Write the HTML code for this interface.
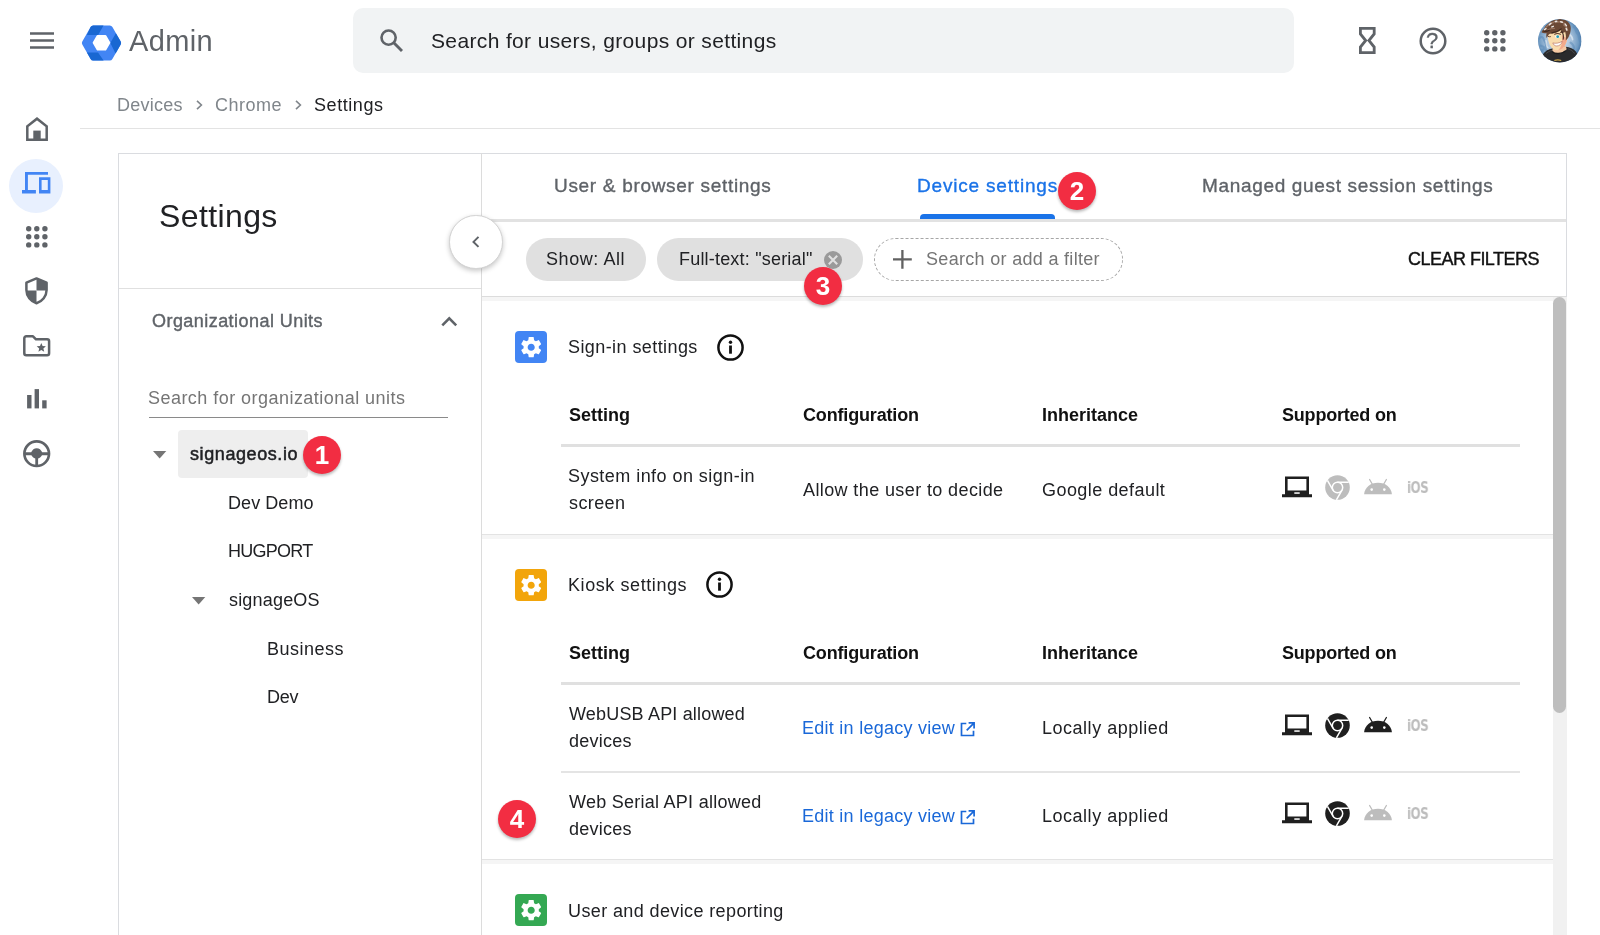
<!DOCTYPE html>
<html lang="en">
<head>
<meta charset="utf-8">
<title>Admin - Settings</title>
<style>
*{box-sizing:border-box;margin:0;padding:0}
html,body{width:1600px;height:935px;overflow:hidden;background:#fff}
body{font-family:"Liberation Sans",sans-serif;color:#202124;position:relative}
.abs{position:absolute}
.t{position:absolute;white-space:nowrap;color:#202124;will-change:transform}
svg{display:block;position:absolute;overflow:visible}
#searchbox{left:352.700px;top:8px;width:941.600px;height:64.500px;background:#f1f3f4;border-radius:10px}
#bcline{left:80px;top:128px;width:1520px;height:1.300px;background:#e3e3e3}
#card{left:118px;top:153px;width:1449px;height:800px;border:1px solid #dadce0;background:#fff}
#leftsep{left:119px;top:288px;width:362px;height:1px;background:#e0e0e0}
#vsep{left:481px;top:153px;width:1.300px;height:800px;background:#dcdcdc}
#tabline{left:482px;top:219.200px;width:1084px;height:2.400px;background:#e2e2e2}
#tabactive{left:919.500px;top:214.400px;width:135.500px;height:4.800px;background:#1a73e8;border-radius:4px 4px 0 0}
#filterline{left:482px;top:296px;width:1084px;height:1px;background:#dcdcdc}
#filtershadow{left:482px;top:297px;width:1084px;height:4px;background:#f5f5f5}
.chip{position:absolute;top:237.700px;height:43.500px;border-radius:22px;background:#e0e0e0}
.gap{position:absolute;left:482px;width:1071px;height:5.300px;background:#f5f5f5;border-top:1.500px solid #e3e3e3}
.hline{position:absolute;left:561px;width:959px}
.badge{position:absolute;width:38px;height:38px;border-radius:50%;background:#f22d42;box-shadow:0 2px 3px rgba(0,0,0,.28);color:#fff;font-weight:bold;font-size:26px;text-align:center;line-height:38px;will-change:transform}
.gear{position:absolute;left:515px;width:32px;height:32px;border-radius:4px}
.tab{color:#5f6368;-webkit-text-stroke:0.350px currentColor}
.med{-webkit-text-stroke:0.400px currentColor}
.med2{-webkit-text-stroke:0.500px currentColor}
.th{color:#111;font-weight:bold}
.lk{color:#1a68d8}
.ios{font-size:15px;line-height:16px;font-weight:bold;color:#bdbdbd;letter-spacing:-0.600px;transform:scaleX(0.880);transform-origin:0 0;font-family:"DejaVu Sans Condensed","Liberation Sans",sans-serif}
</style>
</head>
<body>

<!-- ===== TOP BAR ===== -->
<svg id="hamb" style="left:30px;top:32px" width="24" height="17" viewBox="0 0 24 17"><path d="M0 1.400h24M0 8.500h24M0 15.600h24" stroke="#5f6368" stroke-width="2.500" fill="none"/></svg>
<svg id="logo" style="left:81px;top:25px" width="41" height="36" viewBox="0 0 41 36">
  <path d="M12.200 0.600h16.600a3 3 0 0 1 2.600 1.500l8.300 14.400a3 3 0 0 1 0 3l-8.300 14.400a3 3 0 0 1-2.600 1.500H12.200a3 3 0 0 1-2.600-1.500L1.300 19.500a3 3 0 0 1 0-3L9.600 2.100a3 3 0 0 1 2.600-1.500z" fill="#4285f4"/>
  <path d="M12.200 0.600h10.300l-5.400 9.400-11.200-0.100 3.700-7.800a3 3 0 0 1 2.600-1.500z" fill="#1967d2"/>
  <path d="M39.700 16.500a3 3 0 0 1 0 3L34.600 28.400 29.300 18l5.600-9.800z" fill="#1967d2"/>
  <path d="M9.600 33.900 5.900 27.500l11.100 0 5.600 8H12.200a3 3 0 0 1-2.600-1.500z" fill="#1967d2"/>
  <path d="M16.600 10h7.800a1 1 0 0 1 .9.500l3.900 6.800a1 1 0 0 1 0 1l-3.900 6.800a1 1 0 0 1-.9.500h-7.800a1 1 0 0 1-.9-.5l-3.900-6.800a1 1 0 0 1 0-1l3.900-6.800a1 1 0 0 1 .9-.5z" fill="#fff"/>
</svg>
<div class="abs" id="searchbox"></div>
<svg id="sicon" style="left:380px;top:29px" width="24" height="24" viewBox="0 0 24 24"><circle cx="8.600" cy="8.600" r="7.100" fill="none" stroke="#5f6368" stroke-width="2.600"/><path d="M13.800 13.800 22 22" stroke="#5f6368" stroke-width="2.900"/></svg>
<svg id="hourglass" style="left:1359.200px;top:27px" width="16.600" height="27" viewBox="0 0 16.600 27"><path d="M1.400 1.400h13.800v5.500L9.900 13.500l5.300 6.600v5.500H1.400v-5.500L6.700 13.500 1.400 6.900z" fill="none" stroke="#5f6368" stroke-width="2.800"/></svg>
<svg id="help" style="left:1418.500px;top:26.500px" width="28" height="28" viewBox="0 0 28 28"><circle cx="14" cy="14" r="12.300" fill="none" stroke="#5f6368" stroke-width="2.500"/></svg>
<svg id="apps" style="left:1484.100px;top:30px" width="21.600" height="21.600" viewBox="0 0 21.600 21.600" fill="#5f6368"><circle cx="2.70" cy="2.70" r="2.7"/><circle cx="10.80" cy="2.70" r="2.7"/><circle cx="18.90" cy="2.70" r="2.7"/><circle cx="2.70" cy="10.80" r="2.7"/><circle cx="10.80" cy="10.80" r="2.7"/><circle cx="18.90" cy="10.80" r="2.7"/><circle cx="2.70" cy="18.90" r="2.7"/><circle cx="10.80" cy="18.90" r="2.7"/><circle cx="18.90" cy="18.90" r="2.7"/></svg>
<svg id="avatar" style="left:1537.700px;top:18.600px" width="43.500" height="43.500" viewBox="0 0 44 44">
<defs><clipPath id="avc"><circle cx="22" cy="22" r="22"/></clipPath>
<radialGradient id="avg" cx="48%" cy="48%" r="56%"><stop offset="0" stop-color="#e4edf5"/><stop offset="0.500" stop-color="#a9c3dc"/><stop offset="0.820" stop-color="#6f9ac2"/><stop offset="1" stop-color="#34659a"/></radialGradient></defs>
<g clip-path="url(#avc)">
<rect width="44" height="44" fill="url(#avg)"/>
<path d="M1 20c2-3 4-2 5 1s3 4 2 7-4 2-5 5M36 8c3 2 2 5 4 7s1 6 3 8M33 24c2 1 4 4 3 7s2 3 4 4M3 27c3 1 5 3 6 6" fill="none" stroke="#5b8bb8" stroke-width="2.200" stroke-linecap="round" opacity=".550"/>
<path d="M30 14c2 2 5 3 5 7M8 22c1 3 0 5 2 7" fill="none" stroke="#f1f6fa" stroke-width="1.600" stroke-linecap="round" opacity=".600"/>
<path d="M5 36c2-4 6-5.500 10-6.500l3-1.500h10l3 .500c4 1 7 3 8.500 6.500L38 46H6z" fill="#2a2a2c"/>
<path d="M8 35c3-2.500 6-3.500 9-4M30 30c3 1 5.500 2.500 7 5" fill="none" stroke="#55555a" stroke-width="1" opacity=".700"/>
<path d="M15.500 27.500c2 1.500 9 1.500 12.500-.500l1 3.500c-2.500 3-6.500 4.500-9 4.500s-5-1.500-5.500-3.500z" fill="#f6c9a4"/>
<path d="M14.500 33.200c2.500 2.500 9.500 2.500 13.500-1.200" fill="none" stroke="#1c1c1e" stroke-width="1.400"/>
<path d="M9.500 14c0-5 5-7 10-7s10.500 3 10.500 9c0 3-.500 7-2.500 10-2 3-5.500 5.500-8.500 5.500-3.500 0-6-3-7.500-6.500-1.200-3-2-7-2-11z" fill="#f9dcae"/>
<path d="M24 16c2 2 4 3 5.500 3-.200 3-1 6-2.500 8-1.500 2.300-4 4-6.500 4.500 3-2.500 4.500-7 3.500-15.500z" fill="#f3aa8c"/>
<path d="M10 17.500c1 .500 2 .600 3 .300" fill="none" stroke="#6a4a3a" stroke-width="1"/>
<ellipse cx="19.600" cy="17.900" rx="2.300" ry="1.500" fill="#fff"/><circle cx="19.900" cy="17.900" r="1.400" fill="#1f9bb5"/>
<path d="M16.500 15.600c2-1.200 4.500-1.200 6.500 0" fill="none" stroke="#5a3d2e" stroke-width="1.100"/>
<path d="M15 24.200c3 .800 6.500 .200 9.500-1.700-.500 3-3 4.800-5.500 4.800-2 0-3.500-1.300-4-3.100z" fill="#fff" stroke="#b0665a" stroke-width=".600"/>
<path d="M3.500 13.500c.500-2 2-3 3-4.500.500-2 2.500-3 4-4.500C13 2 16 .500 19 .800c2-1 4.500-1 6.500-.300 3.500.600 6 3 7.200 6 1 3 .300 7-1.200 10.500-.800 2-2 3.800-3.500 4.700.500-3 .300-6-.500-8.500-1.500 1-3.500 1.200-5.500.800 1-1 1.500-2 1.500-3-3 2.500-7.500 3.500-11.500 3.800-1.500 1-2.500 2.700-3.300 4.500-.500-1.800-.500-3.500 0-5-1.800.300-3.700.300-5.200-.800z" fill="#6b4936"/>
<path d="M8 8.500c2-2.500 5-4.500 8-5.200M18 3.500c3-1 6.500-.800 9 1M26 6c2 1 3.500 3 4 5.500M10 11c2-1 4.500-1.500 6.500-1.500" fill="none" stroke="#96735f" stroke-width="1.400" stroke-linecap="round"/>
<path d="M11.500 5.800l1.600-1.400M17.500 2.600l1.500-.400M23 2.800l1.600.400M27.500 5.200l1.200 1.500M6.500 10.800l1.600-1M28.500 9.500l.600 1.600M14 8l1.500-.600" stroke="#ece6e2" stroke-width="1.500" stroke-linecap="round"/>
<path d="M14 14c3-.500 7-2 9.500-4M24 12.500c1.500 2 2 5 1.500 8M6 12.500c2 .200 4-.300 5.500-1.200" fill="none" stroke="#3f2a20" stroke-width="1.100" stroke-linecap="round"/>
<path d="M16.500 42c2-.800 5-.800 7 0" fill="none" stroke="#c8a24a" stroke-width="1.200"/>
</g></svg>

<!-- ===== BREADCRUMB ===== -->
<svg style="left:196px;top:100.300px" width="7" height="10" viewBox="0 0 7 10"><path d="M1 0.800 5.400 5 1 9.200" fill="none" stroke="#80868b" stroke-width="1.600"/></svg>
<svg style="left:295.3px;top:100.300px" width="7" height="10" viewBox="0 0 7 10"><path d="M1 0.800 5.400 5 1 9.200" fill="none" stroke="#80868b" stroke-width="1.600"/></svg>
<div class="abs" id="bcline"></div>

<!-- ===== CARD ===== -->
<div class="abs" id="card"></div>
<div class="abs" id="leftsep"></div>
<div class="abs" id="vsep"></div>
<div class="abs" id="tabline"></div>
<div class="abs" id="tabactive"></div>
<div class="abs" id="filterline"></div>
<div class="abs" id="filtershadow"></div>

<!-- ===== LEFT NAV ===== -->
<svg id="nhome" style="left:25.500px;top:117px" width="22" height="24" viewBox="0 0 22 24"><path d="M1.300 22.700V9.300L11 1.700 20.700 9.300V22.700z" fill="none" stroke="#5f6368" stroke-width="2.500"/><rect x="7.300" y="13.600" width="7.400" height="8.500" fill="#5f6368"/></svg>
<div class="abs" id="ndevbg" style="left:9.400px;top:159.400px;width:54px;height:54px;border-radius:50%;background:#e8f0fe"></div>
<svg id="ndev" style="left:21.600px;top:172.200px" width="29" height="22" viewBox="0 0 29 22" fill="#4285f4"><path d="M3 0h23v2.700H5.900v15.300h8V21.400H0v-3.400h3z"/><path d="M17 5.200h11.400V21.400H17z M19.600 7.900v10.100h6.200V7.900z" fill-rule="evenodd"/></svg>
<svg id="napps" style="left:25.800px;top:226.400px" width="21.600" height="21.600" viewBox="0 0 21.600 21.600" fill="#5f6368"><circle cx="2.70" cy="2.70" r="2.7"/><circle cx="10.80" cy="2.70" r="2.7"/><circle cx="18.90" cy="2.70" r="2.7"/><circle cx="2.70" cy="10.80" r="2.7"/><circle cx="10.80" cy="10.80" r="2.7"/><circle cx="18.90" cy="10.80" r="2.7"/><circle cx="2.70" cy="18.90" r="2.7"/><circle cx="10.80" cy="18.90" r="2.7"/><circle cx="18.90" cy="18.90" r="2.7"/></svg>
<svg id="nshield" style="left:25px;top:277px" width="23" height="28" viewBox="0 0 23 28"><path d="M11.500 1.400 21.600 5.700V13c0 6-4.300 11.500-10.100 13.200C5.700 24.500 1.400 19 1.400 13V5.700z" fill="#fff" stroke="#5f6368" stroke-width="2.500" stroke-linejoin="round"/><path d="M11.500 1.400 21.600 5.700V13.500H11.500z" fill="#5f6368"/><path d="M11.500 13.500V26.200C5.700 24.500 1.400 19 1.400 13.500z" fill="#5f6368"/></svg>
<svg id="nfolder" style="left:22.800px;top:334.500px" width="27.400" height="21.500" viewBox="0 0 27.400 21.500"><path d="M3.300 1.300h6.700l3 3h11.100a2 2 0 0 1 2 2v11.900a2 2 0 0 1-2 2H3.300a2 2 0 0 1-2-2V3.300a2 2 0 0 1 2-2z" fill="none" stroke="#5f6368" stroke-width="2.500" stroke-linejoin="round"/><path d="M18.300 7.900l1.300 3.100 3.300.3-2.500 2.200.8 3.300-2.900-1.800-2.900 1.800.8-3.300-2.500-2.200 3.300-.3z" fill="#5f6368"/></svg>
<svg id="nbars" style="left:26.500px;top:389.300px" width="20" height="20" viewBox="0 0 20 20" fill="#5f6368"><rect x="0.100" y="6" width="4.400" height="13.400"/><rect x="7.600" y="0.100" width="4.400" height="19.300"/><rect x="15.200" y="11.300" width="4.400" height="8.100"/></svg>
<svg id="nwheel" style="left:22.800px;top:440px" width="27.400" height="27.400" viewBox="0 0 27.400 27.400"><circle cx="13.700" cy="13.700" r="12.300" fill="none" stroke="#5f6368" stroke-width="2.700"/><path d="M1.700 12.300h6.500c1-2.500 3.100-4.100 5.500-4.100s4.500 1.600 5.500 4.100h6.500v3h-6.700c-.8 1.600-2.200 2.800-3.900 3.300v7.200h-2.800v-7.200c-1.700-.5-3.100-1.700-3.900-3.300H1.700z" fill="#5f6368"/></svg>

<!-- ===== LEFT PANEL ===== -->
<svg id="ouchev" style="left:440.500px;top:316px" width="16.500" height="10.500" viewBox="0 0 16.500 10.500"><path d="M1.300 9.300 8.250 2.300 15.200 9.300" fill="none" stroke="#5f6368" stroke-width="2.600"/></svg>
<div class="abs" id="ouline" style="left:148.700px;top:417px;width:299.600px;height:1.400px;background:#8a8a8a"></div>
<div class="abs" id="selbox" style="left:178px;top:430px;width:130px;height:48px;background:#eeeeee;border-radius:4px"></div>
<svg style="left:153px;top:451.2px" width="13.300" height="7.600" viewBox="0 0 13.300 7.600"><path d="M0 0h13.300L6.650 7.600z" fill="#757575"/></svg>
<svg style="left:192px;top:596.7px" width="13.300" height="7.600" viewBox="0 0 13.300 7.600"><path d="M0 0h13.300L6.650 7.600z" fill="#757575"/></svg>

<!-- collapse button -->
<div class="abs" id="collapse" style="left:449.300px;top:215px;width:53.500px;height:53.500px;border-radius:50%;background:#fff;border:1px solid #d2d2d2;box-shadow:0 2px 5px rgba(0,0,0,.22)"></div>
<svg id="colchev" style="left:472px;top:236.200px" width="7.500" height="11.800" viewBox="0 0 7.500 11.800"><path d="M6.500 0.900 1.500 5.900l5 5" fill="none" stroke="#5f6368" stroke-width="2"/></svg>

<!-- ===== FILTER ROW ===== -->
<div class="chip" id="chip1" style="left:525.600px;width:120.400px"></div>
<div class="chip" id="chip2" style="left:656.800px;width:206.200px"></div>
<svg id="chipx" style="left:824px;top:250.500px" width="18" height="18" viewBox="0 0 18 18"><circle cx="9" cy="9" r="9" fill="#9a9a9a"/><path d="M4.800 4.800l8.400 8.400M13.200 4.800l-8.400 8.400" stroke="#e0e0e0" stroke-width="2.100"/></svg>
<div class="abs" id="addf" style="left:874px;top:238px;width:248.500px;height:43.300px;border-radius:22px;border:1.300px dashed #a6a6a6"></div>
<svg id="plus" style="left:893px;top:250px" width="18.800" height="18.800" viewBox="0 0 18.800 18.800"><path d="M9.400 0v18.800M0 9.400h18.800" stroke="#616161" stroke-width="2.300"/></svg>

<!-- ===== SCROLLBAR ===== -->
<div class="abs" id="sbtrack" style="left:1553px;top:297px;width:13.500px;height:640px;background:#f1f1f1"></div>
<div class="abs" id="sbthumb" style="left:1553.200px;top:297px;width:13px;height:416px;background:#bebebe;border-radius:7px"></div>

<!-- ===== SECTION 1 ===== -->
<div class="gear" style="top:331.2px;background:#4285f4"></div>
<svg style="left:518.800px;top:335.0px" width="24.400" height="24.400" viewBox="0 0 24 24"><path fill="#fff" d="M19.430 12.980c.040-.320.070-.640.070-.980s-.030-.660-.070-.980l2.110-1.650c.190-.150.240-.420.120-.640l-2-3.460c-.120-.220-.390-.300-.610-.220l-2.490 1c-.520-.400-1.080-.730-1.690-.980l-.380-2.650C14.460 2.180 14.250 2 14 2h-4c-.250 0-.460.180-.490.420l-.380 2.650c-.610.250-1.170.590-1.690.980l-2.490-1c-.230-.090-.490 0-.610.220l-2 3.460c-.130.220-.070.490.120.640l2.110 1.650c-.040.320-.070.650-.070.980s.030.660.070.980l-2.110 1.650c-.190.150-.240.420-.120.640l2 3.460c.120.220.390.300.610.220l2.490-1c.520.400 1.080.730 1.690.980l.380 2.650c.030.240.240.420.490.420h4c.250 0 .460-.180.490-.420l.380-2.650c.610-.250 1.170-.590 1.690-.980l2.490 1c.230.090.490 0 .610-.220l2-3.460c.120-.220.070-.490-.120-.640l-2.110-1.650zM12 15.500c-1.930 0-3.500-1.570-3.500-3.500s1.570-3.500 3.500-3.500 3.500 1.570 3.500 3.500-1.570 3.500-3.500 3.500z"/></svg>
<svg style="left:716.75px;top:333.6px" width="27" height="27" viewBox="0 0 27 27"><circle cx="13.500" cy="13.500" r="12.100" fill="none" stroke="#111" stroke-width="2.500"/><circle cx="13.500" cy="8.200" r="1.700" fill="#111"/><rect x="12.100" y="11.500" width="2.800" height="8.200" fill="#111"/></svg>
<div class="hline" style="top:444.4px;height:2.5px;background:#e0e0e0"></div>
<svg style="left:1281.700px;top:475.7px" width="30" height="22" viewBox="0 0 30 22"><path d="M4.300 1.800h21.400v14.700H4.300z" fill="none" stroke="#1f1f1f" stroke-width="2.600"/><path d="M3 14.500h24v4.200H3z M0 18.300h30v2.900H0z" fill="#1f1f1f"/><rect x="12.300" y="16.300" width="5.400" height="1.500" fill="#fff"/></svg>
<svg style="left:1324.500px;top:474.5px" width="25" height="25" viewBox="0 0 25 25"><circle cx="12.500" cy="12.500" r="12.300" fill="#bdbdbd"/><circle cx="12.500" cy="12.500" r="5.200" fill="none" stroke="#fff" stroke-width="1.500"/><path d="M12.500 7.300H23.700 M8 15.100 2.400 5.400 M17 15.100 11.400 24.800" stroke="#fff" stroke-width="1.500" fill="none"/></svg>
<svg style="left:1363.700px;top:478.7px" width="28" height="16" viewBox="0 0 28 16"><path d="M0.100 15.300C0.600 8.400 6.400 3.700 14 3.700s13.400 4.700 13.900 11.600z" fill="#bdbdbd"/><path d="M5.600 0.500 8.800 6 M22.400 0.500 19.200 6" stroke="#bdbdbd" stroke-width="1.300" stroke-linecap="round"/><circle cx="7.700" cy="10.600" r="1.300" fill="#fff"/><circle cx="20.300" cy="10.600" r="1.300" fill="#fff"/></svg>
<div class="t ios" style="left:1406.600px;top:479.7px">iOS</div>
<div class="gap" style="top:533.500px"></div>
<!-- ===== SECTION 2 ===== -->
<div class="gear" style="top:568.8px;background:#f2a50b"></div>
<svg style="left:518.800px;top:572.5999999999999px" width="24.400" height="24.400" viewBox="0 0 24 24"><path fill="#fff" d="M19.430 12.980c.040-.320.070-.640.070-.980s-.030-.660-.070-.980l2.110-1.650c.190-.150.240-.420.120-.640l-2-3.460c-.120-.220-.390-.300-.610-.220l-2.490 1c-.520-.400-1.080-.730-1.690-.980l-.380-2.650C14.460 2.180 14.250 2 14 2h-4c-.250 0-.460.180-.490.420l-.380 2.650c-.610.250-1.170.590-1.690.980l-2.490-1c-.230-.090-.490 0-.610.220l-2 3.460c-.130.220-.070.490.120.640l2.110 1.650c-.040.320-.070.650-.070.980s.030.660.070.980l-2.110 1.650c-.190.150-.240.420-.120.640l2 3.460c.120.220.390.300.610.220l2.490-1c.520.400 1.080.730 1.690.980l.380 2.650c.030.240.240.420.490.420h4c.250 0 .460-.180.490-.420l.380-2.650c.610-.250 1.170-.590 1.690-.980l2.490 1c.230.090.490 0 .610-.220l2-3.460c.120-.220.070-.490-.120-.640l-2.110-1.650zM12 15.500c-1.930 0-3.500-1.570-3.500-3.500s1.570-3.500 3.500-3.500 3.500 1.570 3.500 3.500-1.570 3.500-3.500 3.500z"/></svg>
<svg style="left:706.1px;top:571.2px" width="27" height="27" viewBox="0 0 27 27"><circle cx="13.500" cy="13.500" r="12.100" fill="none" stroke="#111" stroke-width="2.500"/><circle cx="13.500" cy="8.200" r="1.700" fill="#111"/><rect x="12.100" y="11.500" width="2.800" height="8.200" fill="#111"/></svg>
<div class="hline" style="top:682.4px;height:2.5px;background:#e0e0e0"></div>
<svg style="left:960px;top:722px" width="15" height="15" viewBox="0 0 15 15"><path d="M6.300 1.500H1.500v12h12V8.700" fill="none" stroke="#1a68d8" stroke-width="1.700"/><path d="M8.600 0.900h5.500v5.500M13.900 1.100 6.700 8.300" fill="none" stroke="#1a68d8" stroke-width="1.700"/></svg>
<svg style="left:1281.700px;top:713.7px" width="30" height="22" viewBox="0 0 30 22"><path d="M4.300 1.800h21.400v14.700H4.300z" fill="none" stroke="#1f1f1f" stroke-width="2.600"/><path d="M3 14.500h24v4.200H3z M0 18.300h30v2.900H0z" fill="#1f1f1f"/><rect x="12.300" y="16.300" width="5.400" height="1.500" fill="#fff"/></svg>
<svg style="left:1324.500px;top:712.5px" width="25" height="25" viewBox="0 0 25 25"><circle cx="12.500" cy="12.500" r="12.300" fill="#1f1f1f"/><circle cx="12.500" cy="12.500" r="5.200" fill="none" stroke="#fff" stroke-width="1.500"/><path d="M12.500 7.300H23.700 M8 15.100 2.400 5.400 M17 15.100 11.400 24.800" stroke="#fff" stroke-width="1.500" fill="none"/></svg>
<svg style="left:1363.700px;top:716.7px" width="28" height="16" viewBox="0 0 28 16"><path d="M0.100 15.300C0.600 8.400 6.400 3.700 14 3.700s13.400 4.700 13.900 11.600z" fill="#1f1f1f"/><path d="M5.600 0.500 8.800 6 M22.400 0.500 19.200 6" stroke="#1f1f1f" stroke-width="1.300" stroke-linecap="round"/><circle cx="7.700" cy="10.600" r="1.300" fill="#fff"/><circle cx="20.300" cy="10.600" r="1.300" fill="#fff"/></svg>
<div class="t ios" style="left:1406.600px;top:717.7px">iOS</div>
<div class="hline" style="top:771.3px;height:1.3px;background:#e4e4e4"></div>
<svg style="left:960px;top:810px" width="15" height="15" viewBox="0 0 15 15"><path d="M6.300 1.500H1.500v12h12V8.700" fill="none" stroke="#1a68d8" stroke-width="1.700"/><path d="M8.600 0.900h5.500v5.500M13.900 1.100 6.700 8.300" fill="none" stroke="#1a68d8" stroke-width="1.700"/></svg>
<svg style="left:1281.700px;top:801.7px" width="30" height="22" viewBox="0 0 30 22"><path d="M4.300 1.800h21.400v14.700H4.300z" fill="none" stroke="#1f1f1f" stroke-width="2.600"/><path d="M3 14.500h24v4.200H3z M0 18.300h30v2.900H0z" fill="#1f1f1f"/><rect x="12.300" y="16.300" width="5.400" height="1.500" fill="#fff"/></svg>
<svg style="left:1324.500px;top:800.5px" width="25" height="25" viewBox="0 0 25 25"><circle cx="12.500" cy="12.500" r="12.300" fill="#1f1f1f"/><circle cx="12.500" cy="12.500" r="5.200" fill="none" stroke="#fff" stroke-width="1.500"/><path d="M12.500 7.300H23.700 M8 15.100 2.400 5.400 M17 15.100 11.400 24.800" stroke="#fff" stroke-width="1.500" fill="none"/></svg>
<svg style="left:1363.700px;top:804.7px" width="28" height="16" viewBox="0 0 28 16"><path d="M0.100 15.300C0.600 8.400 6.400 3.700 14 3.700s13.400 4.700 13.900 11.600z" fill="#bdbdbd"/><path d="M5.600 0.500 8.800 6 M22.400 0.500 19.200 6" stroke="#bdbdbd" stroke-width="1.300" stroke-linecap="round"/><circle cx="7.700" cy="10.600" r="1.300" fill="#fff"/><circle cx="20.300" cy="10.600" r="1.300" fill="#fff"/></svg>
<div class="t ios" style="left:1406.600px;top:805.7px">iOS</div>
<div class="gap" style="top:859.200px"></div>
<!-- ===== SECTION 3 ===== -->
<div class="gear" style="top:894.4px;background:#34a853"></div>
<svg style="left:518.800px;top:898.1999999999999px" width="24.400" height="24.400" viewBox="0 0 24 24"><path fill="#fff" d="M19.430 12.980c.040-.320.070-.640.070-.980s-.030-.660-.070-.980l2.110-1.650c.190-.150.240-.420.120-.640l-2-3.460c-.120-.220-.390-.300-.610-.220l-2.490 1c-.520-.400-1.080-.730-1.690-.980l-.380-2.650C14.460 2.180 14.250 2 14 2h-4c-.250 0-.460.180-.490.420l-.380 2.650c-.610.250-1.170.590-1.690.980l-2.490-1c-.230-.090-.490 0-.610.220l-2 3.460c-.130.220-.070.490.120.640l2.110 1.650c-.040.320-.070.650-.070.980s.030.660.070.980l-2.110 1.650c-.190.150-.240.420-.120.640l2 3.460c.120.220.390.300.610.220l2.490-1c.520.400 1.080.730 1.690.980l.380 2.650c.030.240.240.420.490.420h4c.250 0 .460-.180.490-.420l.380-2.650c.610-.250 1.170-.590 1.690-.980l2.490 1c.230.090.490 0 .610-.220l2-3.460c.120-.220.070-.490-.120-.640l-2.110-1.650zM12 15.500c-1.930 0-3.500-1.570-3.500-3.500s1.570-3.500 3.500-3.500 3.500 1.570 3.500 3.500-1.570 3.500-3.500 3.500z"/></svg>

<!-- ===== TEXT ===== -->
<div class="t " id="admin" style="left:129px;top:23.35px;font-size:29px;line-height:36px;letter-spacing:0.375px;color:#5f6368">Admin</div>
<div class="t " id="stext" style="left:431px;top:27.72px;font-size:21px;line-height:26px;letter-spacing:0.358px;color:#202124">Search for users, groups or settings</div>
<div class="t " id="helpq" style="left:1426px;top:26.78px;font-size:22px;line-height:28px;letter-spacing:0.000px;color:#5f6368;-webkit-text-stroke:0.3px #5f6368">?</div>
<div class="t " id="bc1" style="left:117px;top:93.76px;font-size:18px;line-height:22px;letter-spacing:0.250px;color:#80868b">Devices</div>
<div class="t " id="bc2" style="left:215px;top:93.76px;font-size:18px;line-height:22px;letter-spacing:0.500px;color:#80868b">Chrome</div>
<div class="t " id="bc3" style="left:314px;top:93.76px;font-size:18px;line-height:22px;letter-spacing:0.571px;color:#202124">Settings</div>
<div class="t " id="ltitle" style="left:159px;top:196.31px;font-size:32px;line-height:40px;letter-spacing:0.392px;color:#202124">Settings</div>
<div class="t med" id="ou" style="left:152px;top:310.26px;font-size:18px;line-height:22px;letter-spacing:0.447px;color:#5f6368">Organizational Units</div>
<div class="t " id="ousearch" style="left:148px;top:386.51px;font-size:18px;line-height:22px;letter-spacing:0.459px;color:#757575">Search for organizational units</div>
<div class="t med2" id="tr0" style="left:190px;top:442.96px;font-size:18px;line-height:22px;letter-spacing:0.590px">signageos.io</div>
<div class="t " id="tr1" style="left:228px;top:491.56px;font-size:18px;line-height:22px;letter-spacing:0.072px">Dev Demo</div>
<div class="t " id="tr2" style="left:228px;top:540.16px;font-size:18px;line-height:22px;letter-spacing:-0.749px">HUGPORT</div>
<div class="t " id="tr3" style="left:229px;top:588.96px;font-size:18px;line-height:22px;letter-spacing:0.185px">signageOS</div>
<div class="t " id="tr4" style="left:267px;top:637.56px;font-size:18px;line-height:22px;letter-spacing:0.501px">Business</div>
<div class="t " id="tr5" style="left:267px;top:686.06px;font-size:18px;line-height:22px;letter-spacing:-0.250px">Dev</div>
<div class="t tab" id="tab1" style="left:554px;top:174.42px;font-size:19px;line-height:24px;letter-spacing:0.690px">User &amp; browser settings</div>
<div class="t tab" id="tab2" style="left:917px;top:174.42px;font-size:19px;line-height:24px;letter-spacing:0.815px;color:#1a73e8">Device settings</div>
<div class="t tab" id="tab3" style="left:1202px;top:174.42px;font-size:19px;line-height:24px;letter-spacing:0.668px">Managed guest session settings</div>
<div class="t " id="chip1t" style="left:546px;top:247.96px;font-size:18px;line-height:22px;letter-spacing:0.565px">Show: All</div>
<div class="t " id="chip2t" style="left:679px;top:247.96px;font-size:18px;line-height:22px;letter-spacing:0.195px">Full-text: "serial"</div>
<div class="t " id="addft" style="left:926px;top:247.96px;font-size:18px;line-height:22px;letter-spacing:0.310px;color:#757575">Search or add a filter</div>
<div class="t med" id="clear" style="left:1408px;top:247.96px;font-size:18px;line-height:22px;letter-spacing:-0.520px;color:#111">CLEAR FILTERS</div>
<div class="t " id="s1h" style="left:568px;top:335.76px;font-size:18px;line-height:22px;letter-spacing:0.418px">Sign-in settings</div>
<div class="t th" id="s1a" style="left:569px;top:403.76px;font-size:18px;line-height:22px;letter-spacing:-0.000px">Setting</div>
<div class="t th" id="s1b" style="left:803px;top:403.76px;font-size:18px;line-height:22px;letter-spacing:-0.167px">Configuration</div>
<div class="t th" id="s1c" style="left:1042px;top:403.76px;font-size:18px;line-height:22px;letter-spacing:0.000px">Inheritance</div>
<div class="t th" id="s1d" style="left:1282px;top:403.76px;font-size:18px;line-height:22px;letter-spacing:-0.205px">Supported on</div>
<div class="t " id="s1r1" style="left:568px;top:465.46px;font-size:18px;line-height:22px;letter-spacing:0.453px">System info on sign-in</div>
<div class="t " id="s1r2" style="left:569px;top:492.36px;font-size:18px;line-height:22px;letter-spacing:0.400px">screen</div>
<div class="t " id="s1r3" style="left:803px;top:479.06px;font-size:18px;line-height:22px;letter-spacing:0.391px">Allow the user to decide</div>
<div class="t " id="s1r4" style="left:1042px;top:479.06px;font-size:18px;line-height:22px;letter-spacing:0.443px">Google default</div>
<div class="t " id="s2h" style="left:568px;top:573.96px;font-size:18px;line-height:22px;letter-spacing:0.578px">Kiosk settings</div>
<div class="t th" id="s2a" style="left:569px;top:641.76px;font-size:18px;line-height:22px;letter-spacing:-0.000px">Setting</div>
<div class="t th" id="s2b" style="left:803px;top:641.76px;font-size:18px;line-height:22px;letter-spacing:-0.167px">Configuration</div>
<div class="t th" id="s2c" style="left:1042px;top:641.76px;font-size:18px;line-height:22px;letter-spacing:0.000px">Inheritance</div>
<div class="t th" id="s2d" style="left:1282px;top:641.76px;font-size:18px;line-height:22px;letter-spacing:-0.205px">Supported on</div>
<div class="t " id="s2r1" style="left:569px;top:703.46px;font-size:18px;line-height:22px;letter-spacing:0.177px">WebUSB API allowed</div>
<div class="t " id="s2r2" style="left:569px;top:730.26px;font-size:18px;line-height:22px;letter-spacing:0.250px">devices</div>
<div class="t lk" id="s2r3" style="left:802px;top:717.26px;font-size:18px;line-height:22px;letter-spacing:0.264px">Edit in legacy view</div>
<div class="t " id="s2r4" style="left:1042px;top:717.26px;font-size:18px;line-height:22px;letter-spacing:0.517px">Locally applied</div>
<div class="t " id="s2r5" style="left:569px;top:791.06px;font-size:18px;line-height:22px;letter-spacing:0.261px">Web Serial API allowed</div>
<div class="t " id="s2r6" style="left:569px;top:817.76px;font-size:18px;line-height:22px;letter-spacing:0.250px">devices</div>
<div class="t lk" id="s2r7" style="left:802px;top:805.26px;font-size:18px;line-height:22px;letter-spacing:0.264px">Edit in legacy view</div>
<div class="t " id="s2r8" style="left:1042px;top:805.26px;font-size:18px;line-height:22px;letter-spacing:0.517px">Locally applied</div>
<div class="t " id="s3h" style="left:568px;top:899.76px;font-size:18px;line-height:22px;letter-spacing:0.385px">User and device reporting</div>
<!-- ===== BADGES ===== -->
<div class="badge" id="b1" style="left:303.25px;top:436px">1</div>
<div class="badge" id="b2" style="left:1057.5px;top:171.5px">2</div>
<div class="badge" id="b3" style="left:804.2px;top:267.4px">3</div>
<div class="badge" id="b4" style="left:498.1px;top:799.75px">4</div>


</body>
</html>
